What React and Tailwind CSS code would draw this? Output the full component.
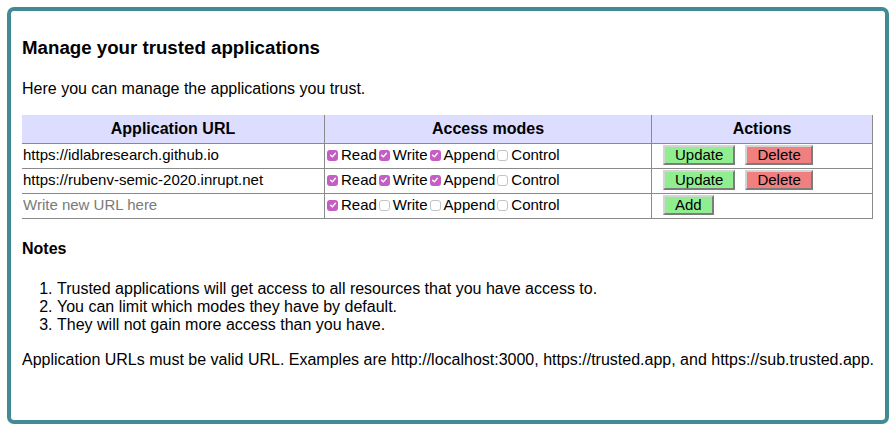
import React from "react";

const apps = [
  { url: "https://idlabresearch.github.io", modes: [true, true, true, false] },
  { url: "https://rubenv-semic-2020.inrupt.net", modes: [true, true, true, false] },
];

const MODES = ["Read", "Write", "Append", "Control"];

const Check = ({ checked }) =>
  checked ? (
    <span className="ml-[2px] mr-[3px] inline-flex h-[11px] w-[11px] shrink-0 items-center justify-center rounded-[3px] bg-[#c45ec5]">
      <svg viewBox="0 0 10 10" className="h-[8px] w-[8px]" fill="none" stroke="white" strokeWidth="1.8" strokeLinecap="round" strokeLinejoin="round">
        <path d="M2 5.2 L4.2 7.3 L8 2.8" />
      </svg>
    </span>
  ) : (
    <span className="ml-[2px] mr-[3px] inline-block h-[11px] w-[11px] shrink-0 rounded-[3px] border border-[#c4c4c4] bg-white" />
  );

const Modes = ({ modes }) => (
  <div className="flex items-center">
    {MODES.map((m, i) => (
      <label key={m} className="flex items-center">
        <Check checked={modes[i]} />
        <span>{m}</span>
      </label>
    ))}
  </div>
);

const Btn = ({ color, children }) => (
  <button
    className={
      "h-[20px] border-2 border-t-[#d4d4d4] border-l-[#d4d4d4] border-r-[#7c7c7c] border-b-[#7c7c7c] px-[10px] text-[15px] leading-[16px] text-black " +
      (color === "green" ? "bg-[#90ee90]" : "bg-[#f08080]")
    }
  >
    {children}
  </button>
);

const cell = "flex h-[25px] items-center border-b border-r border-[#8a8a8a] pb-[2px] text-[15px]";

export default function App() {
  return (
    <div className="bg-white font-['Liberation_Sans',Arial,sans-serif] text-black">
      <div className="m-[7px] h-[417px] rounded-[7px] border-4 border-[#408b94] px-[11px] pt-[11px]">
        {/* Title */}
        <h3 className="mt-[15px] text-[18.7px] font-bold leading-[22px]">Manage your trusted applications</h3>
        <p className="mt-[21px] text-[16px] leading-[18px]">Here you can manage the applications you trust.</p>

        {/* Table */}
        <div className="mt-[17px] grid w-[851px] grid-cols-[303px_327px_221px]">
          <div className="flex h-[29px] items-center justify-center border-b border-r border-[#8a8a8a] bg-[#ddddff] text-[16px] font-bold">Application URL</div>
          <div className="flex h-[29px] items-center justify-center border-b border-r border-[#8a8a8a] bg-[#ddddff] text-[16px] font-bold">Access modes</div>
          <div className="flex h-[29px] items-center justify-center border-b border-r border-[#8a8a8a] bg-[#ddddff] text-[16px] font-bold">Actions</div>

          {apps.map((a) => (
            <React.Fragment key={a.url}>
              <div className={cell + " pl-[1px]"}>{a.url}</div>
              <div className={cell}>
                <Modes modes={a.modes} />
              </div>
              <div className={cell + " gap-[10px] pl-[11px]"}>
                <Btn color="green">Update</Btn>
                <Btn color="red">Delete</Btn>
              </div>
            </React.Fragment>
          ))}

          <div className={cell + " pl-[1px]"}>
            <input
              className="w-full bg-transparent text-[15px] outline-none placeholder:text-[#7a7a7a]"
              placeholder="Write new URL here"
            />
          </div>
          <div className={cell}>
            <Modes modes={[true, false, false, false]} />
          </div>
          <div className={cell + " pl-[11px]"}>
            <Btn color="green">Add</Btn>
          </div>
        </div>

        {/* Notes */}
        <h4 className="mt-[21px] text-[16px] font-bold leading-[18px]">Notes</h4>
        <ol className="mt-[22px] list-decimal pl-[35px] text-[16px] leading-[18px]">
          <li>Trusted applications will get access to all resources that you have access to.</li>
          <li>You can limit which modes they have by default.</li>
          <li>They will not gain more access than you have.</li>
        </ol>
        <p className="mt-[17px] whitespace-nowrap text-[16px] leading-[18px]">
          Application URLs must be valid URL. Examples are http://localhost:3000, https://trusted.app, and https://sub.trusted.app.
        </p>
      </div>
    </div>
  );
}
